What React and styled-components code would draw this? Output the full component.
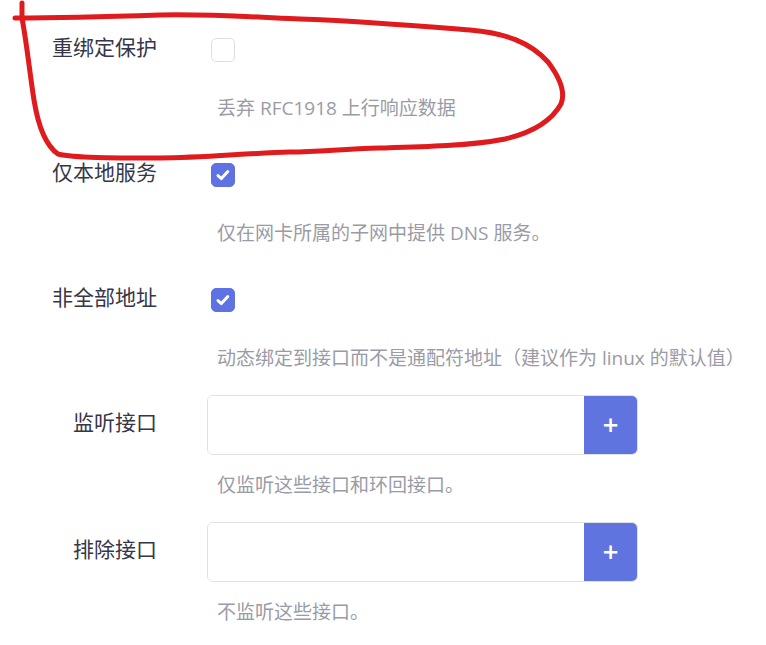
import React from 'react'
import styled, { createGlobalStyle } from 'styled-components'

const GlobalStyle = createGlobalStyle`
  html, body {
    margin: 0;
    padding: 0;
    background: #fff;
  }
  body {
    font-family: "Open Sans", "Noto Sans CJK SC", sans-serif;
  }
`

const fields = [
  { label: '重绑定保护', type: 'check', checked: false, help: '丢弃 RFC1918 上行响应数据' },
  { label: '仅本地服务', type: 'check', checked: true, help: '仅在网卡所属的子网中提供 DNS 服务。' },
  { label: '非全部地址', type: 'check', checked: true, help: '动态绑定到接口而不是通配符地址（建议作为 linux 的默认值）' },
  { label: '监听接口', type: 'list', help: '仅监听这些接口和环回接口。' },
  { label: '排除接口', type: 'list', help: '不监听这些接口。' },
]

const App = () => {
  return (
    <Page>
      <GlobalStyle />
      <Form>
        {fields.map((f) => (
          <Field key={f.label}>
            <Label>{f.label}</Label>
            <Controls>
              <ControlLine>
                {f.type === 'check' ? (
                  <Checkbox checked={f.checked}>
                    {f.checked && (
                      <svg width="16" height="16" viewBox="0 0 16 16">
                        <path d="M3 8.6 L6.4 11.6 L12.8 4.6" fill="none" stroke="#fff" strokeWidth="3" strokeLinecap="round" strokeLinejoin="round" />
                      </svg>
                    )}
                  </Checkbox>
                ) : (
                  <InputGroup>
                    <TextInput type="text" />
                    <AddButton>+</AddButton>
                  </InputGroup>
                )}
              </ControlLine>
              <Help wide={f.type === 'list'}>{f.help}</Help>
            </Controls>
          </Field>
        ))}
      </Form>
      <Scribble width="766" height="170" viewBox="0 0 766 170">
        <path
          d="M22 3 L22 18 M15 18 C60 18 100 17 160 15 C220 14 270 18 300 19 C360 21 420 26 470 30 C505 33 530 42 548 62 C560 78 566 92 561 104 C552 120 535 132 505 139 C470 146 420 147 380 148 C340 149 320 152 290 152 C250 153 200 158 160 158 C110 158 75 158 58 154 C45 145 38 125 34 100 C30 75 27 45 22 18"
          fill="none"
          stroke="#e01b1e"
          strokeWidth="5"
          strokeLinecap="round"
          strokeLinejoin="round"
        />
      </Scribble>
    </Page>
  )
}

export default App

const Page = styled.div`
  position: relative;
  width: 766px;
  height: 645px;
  overflow: hidden;
  background: #fff;
`

const Form = styled.div`
  display: flex;
  flex-direction: column;
  gap: 23px;
  padding-top: 20px;
`

const Field = styled.div`
  display: grid;
  grid-template-columns: 157px 1fr;
  column-gap: 50px;
  align-items: start;
`

const Label = styled.div`
  text-align: right;
  height: 60px;
  line-height: 54px;
  font-size: 21px;
  color: #363648;
  white-space: nowrap;
`

const Controls = styled.div`
  display: flex;
  flex-direction: column;
`

const ControlLine = styled.div`
  height: 60px;
  display: flex;
  align-items: center;
`

const Checkbox = styled.span`
  box-sizing: border-box;
  width: 24px;
  height: 24px;
  margin-left: 4px;
  border-radius: 5px;
  display: flex;
  align-items: center;
  justify-content: center;
  background: ${(p) => (p.checked ? '#5e72e4' : '#fff')};
  border: 1px solid ${(p) => (p.checked ? '#5e72e4' : '#dcdfe6')};
`

const InputGroup = styled.div`
  display: flex;
  width: 431px;
  height: 60px;
  box-sizing: border-box;
  border: 1px solid #dee2e6;
  border-radius: 6px;
  overflow: hidden;
`

const TextInput = styled.input`
  flex: 1;
  border: none;
  outline: none;
  padding: 0 14px;
  font-size: 18px;
  background: #fff;
`

const AddButton = styled.div`
  width: 53px;
  background: #6074e0;
  color: #fff;
  font-size: 21px;
  font-weight: 700;
  display: flex;
  align-items: center;
  justify-content: center;
  font-family: "DejaVu Sans", sans-serif;
`

const Help = styled.div`
  margin-top: ${(p) => (p.wide ? '16px' : '14px')};
  padding-left: 10px;
  font-size: 19px;
  line-height: 28px;
  color: #9a9ba6;
  white-space: nowrap;
`

const Scribble = styled.svg`
  position: absolute;
  left: 0;
  top: 0;
  pointer-events: none;
`
